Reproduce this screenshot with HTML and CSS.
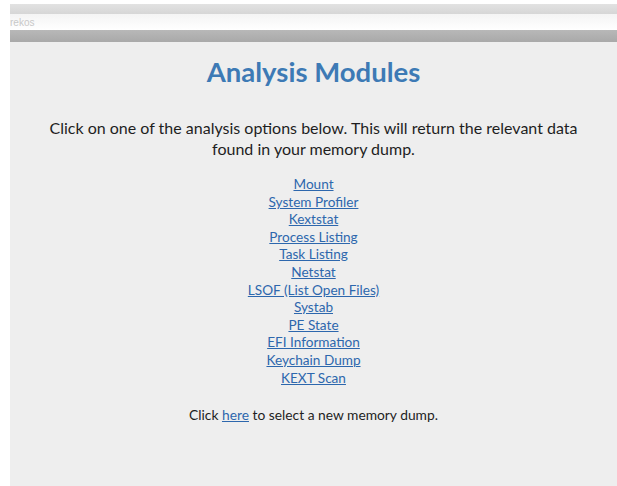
FILE: index.html
```html
<!DOCTYPE html>
<html lang="en">
<head>
<meta charset="utf-8">
<title>Analysis Modules</title>
<link rel="stylesheet" href="styles.css">
</head>
<body>
<div class="window">
  <div class="chrome">
    <div class="tabstrip"></div>
    <div class="addressbar"><span class="address">rekos</span></div>
    <div class="toolbar"></div>
  </div>
  <main class="content">
    <h1 class="title">Analysis Modules</h1>
    <p class="intro">Click on one of the analysis options below. This will return the relevant data<br>found in your memory dump.</p>
    <ul class="modules">
      <li><a href="#">Mount</a></li>
      <li><a href="#">System Profiler</a></li>
      <li><a href="#">Kextstat</a></li>
      <li><a href="#">Process Listing</a></li>
      <li><a href="#">Task Listing</a></li>
      <li><a href="#">Netstat</a></li>
      <li><a href="#">LSOF (List Open Files)</a></li>
      <li><a href="#">Systab</a></li>
      <li><a href="#">PE State</a></li>
      <li><a href="#">EFI Information</a></li>
      <li><a href="#">Keychain Dump</a></li>
      <li><a href="#">KEXT Scan</a></li>
    </ul>
    <p class="footer-note">Click <a href="#">here</a> to select a new memory dump.</p>
  </main>
</div>
</body>
</html>
```

FILE: styles.css
```css
html, body {
  margin: 0;
  padding: 0;
  background: #ffffff;
  height: 100%;
}

.window {
  margin-left: 10px;
  padding-top: 4px;
  height: 100%;
  box-sizing: border-box;
  display: flex;
  flex-direction: column;
}

.tabstrip {
  height: 10px;
  background: linear-gradient(#e2e2e2, #d6d6d6);
}

.addressbar {
  height: 16px;
  background: linear-gradient(#f4f4f4, #ffffff);
  display: flex;
  align-items: center;
}

.address {
  font-family: "Liberation Sans", sans-serif;
  font-size: 10px;
  color: #c8c8c8;
}

.toolbar {
  height: 12px;
  background: linear-gradient(#b8b8b8, #a9a9a9);
}

.content {
  flex: 1;
  background: #eeeeee;
  text-align: center;
  font-family: Lato, "Open Sans", sans-serif;
  color: #1e1e1e;
}

.title {
  margin: 14px 0 0;
  font-size: 27.5px;
  line-height: 32px;
  font-weight: 700;
  color: #3d7ab5;
}

.intro {
  margin: 29px 0 0;
  font-size: 16px;
  line-height: 21px;
}

.modules {
  list-style: none;
  margin: 17px 0 0;
  padding: 0;
  font-size: 13.6px;
  line-height: 17.6px;
}

a {
  color: #2d67ad;
  text-decoration: underline;
}

.footer-note {
  margin: 19px 0 0;
  font-size: 13.8px;
  line-height: 18px;
}
```
